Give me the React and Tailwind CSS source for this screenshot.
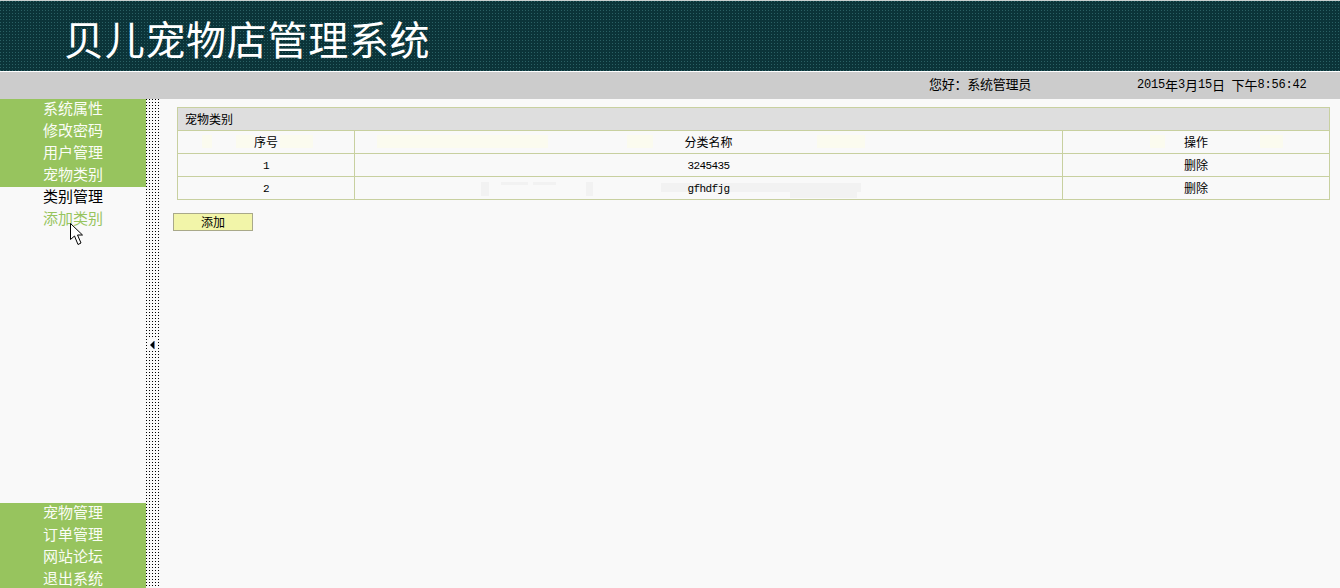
const cjk = "font-['Noto_Sans_CJK_SC','Liberation_Sans',sans-serif]";
const mono = "font-['Liberation_Mono',monospace]";
const dateMono = `${mono} text-[12px] tracking-[-0.2px]`;
const dataMono = `${mono} pt-[2px] text-[11px] tracking-[-0.6px]`;

function MenuItem({ children, className = "text-[#fbfdf6]" }) {
  return (
    <div className={`h-[22px] text-center text-[15px] leading-[18px] ${cjk} ${className}`}>
      {children}
    </div>
  );
}

function Cell({ children, className = `${cjk} text-xs` }) {
  return (
    <td className={`relative h-[23px] border border-[#c8d0a0] text-center align-middle leading-none text-black ${className}`}>
      {children}
    </td>
  );
}

function Patch({ className }) {
  return <i className={`absolute block ${className}`} />;
}

const pale = "top-[4px] h-[13px] bg-[#fbfbef]";
const grey = "bg-[#f2f2f2]";

export default function App() {
  return (
    <div className={`flex h-[588px] w-[1340px] flex-col overflow-hidden bg-[#f9f9f9] ${cjk}`}>
      <header className="h-[71px] shrink-0 border-t border-[#c9cfcf] bg-[#0b3439] bg-[conic-gradient(at_1px_1px,transparent_75%,#2a6064_0)] bg-[length:3px_3px] pl-[64px]">
        <h1 className="text-[40px] font-normal leading-[74px] tracking-[0.7px] text-white">贝儿宠物店管理系统</h1>
      </header>
      <div className="h-px shrink-0 bg-white" />
      <div className="flex h-[27px] shrink-0 items-center bg-[#cccccc] text-black">
        <span className="mb-[4px] ml-[929px] w-[102px] whitespace-nowrap text-[13px] leading-none tracking-[-0.25px]">您好：系统管理员</span>
        <span className="mb-[2px] ml-[106px] flex items-center whitespace-nowrap text-[13px] leading-none">
          <span className={dateMono}>2015</span>年
          <span className={dateMono}>3</span>月
          <span className={dateMono}>15</span>日
          <span className="w-[6.5px]" />下午
          <span className={dateMono}>8:56:42</span>
        </span>
      </div>
      <div className="flex min-h-0 flex-1">
        <aside className="relative flex w-[146px] shrink-0 flex-col justify-between">
          <div>
            <div className="bg-[#97c45e]">
              <MenuItem>系统属性</MenuItem>
              <MenuItem>修改密码</MenuItem>
              <MenuItem>用户管理</MenuItem>
              <MenuItem>宠物类别</MenuItem>
            </div>
            <MenuItem className="text-black">类别管理</MenuItem>
            <MenuItem className="text-[#97c45e]">添加类别</MenuItem>
          </div>
          <div className="mb-[-3px] bg-[#97c45e]">
            <MenuItem>宠物管理</MenuItem>
            <MenuItem>订单管理</MenuItem>
            <MenuItem>网站论坛</MenuItem>
            <MenuItem>退出系统</MenuItem>
          </div>
          <svg className="absolute left-[69px] top-[124px]" width="15" height="23" viewBox="0 0 15 23">
            <path d="M1.5 0.5V16.5L5.5 13L9 21.5L12 20L8.5 12H13.5Z" fill="#fff" stroke="#000" strokeWidth="1" />
          </svg>
        </aside>
        <div className="relative w-[14px] shrink-0 bg-[conic-gradient(at_1px_1px,transparent_75%,#000_0)] bg-[length:3px_3px]">
          <svg className="absolute left-[3px] top-[240px]" width="7" height="12" viewBox="0 0 7 12">
            <rect width="7" height="12" fill="#f9f9f9" />
            <path d="M1 6L5 2V10Z" fill="#000" />
            <rect x="5" y="2" width="1" height="8" fill="#5b84b8" />
          </svg>
        </div>
        <main className="min-w-0 flex-1 pl-[13px] pt-2">
          <table className="ml-1 w-[1153px] table-fixed border-collapse">
            <colgroup>
              <col className="w-[177px]" />
              <col className="w-[708px]" />
              <col />
            </colgroup>
            <thead>
              <tr>
                <th colSpan={3} className="h-[23px] border border-[#c8d0a0] bg-[#dedede] pl-[7px] text-left text-xs font-normal text-black">
                  宠物类别
                </th>
              </tr>
              <tr>
                <Cell>
                  <Patch className={`${pale} left-[24px] w-[10px]`} />
                  <Patch className={`${pale} left-[58px] w-[18px]`} />
                  <Patch className={`${pale} left-[102px] w-[33px]`} />
                  <span className="relative">序号</span>
                </Cell>
                <Cell>
                  <Patch className={`${pale} left-[22px] w-[171px]`} />
                  <Patch className={`${pale} left-[272px] w-[26px]`} />
                  <Patch className={`${pale} left-[462px] w-[48px]`} />
                  <span className="relative">分类名称</span>
                </Cell>
                <Cell>
                  <Patch className={`${pale} left-[87px] w-[15px]`} />
                  <Patch className={`${pale} left-[197px] w-[23px]`} />
                  <span className="relative">操作</span>
                </Cell>
              </tr>
            </thead>
            <tbody>
              <tr>
                <Cell className={dataMono}>1</Cell>
                <Cell className={dataMono}>3245435</Cell>
                <Cell>删除</Cell>
              </tr>
              <tr>
                <Cell className={dataMono}>2</Cell>
                <Cell className={dataMono}>
                  <Patch className={`${grey} left-[126px] top-[5px] h-[14px] w-[8px]`} />
                  <Patch className={`${grey} left-[146px] top-[5px] h-[3px] w-[27px]`} />
                  <Patch className={`${grey} left-[178px] top-[5px] h-[3px] w-[23px]`} />
                  <Patch className={`${grey} left-[231px] top-[5px] h-[14px] w-[7px]`} />
                  <Patch className={`${grey} left-[306px] top-[6px] h-[9px] w-[200px]`} />
                  <Patch className={`${grey} left-[435px] top-[12px] h-[9px] w-[67px]`} />
                  <span className="relative">gfhdfjg</span>
                </Cell>
                <Cell>删除</Cell>
              </tr>
            </tbody>
          </table>
          <button className="mt-[13px] block h-[18px] w-[80px] border border-[#a9a98a] bg-[#f2f5a9] p-0 text-xs leading-none text-black">
            添加
          </button>
        </main>
      </div>
    </div>
  );
}
